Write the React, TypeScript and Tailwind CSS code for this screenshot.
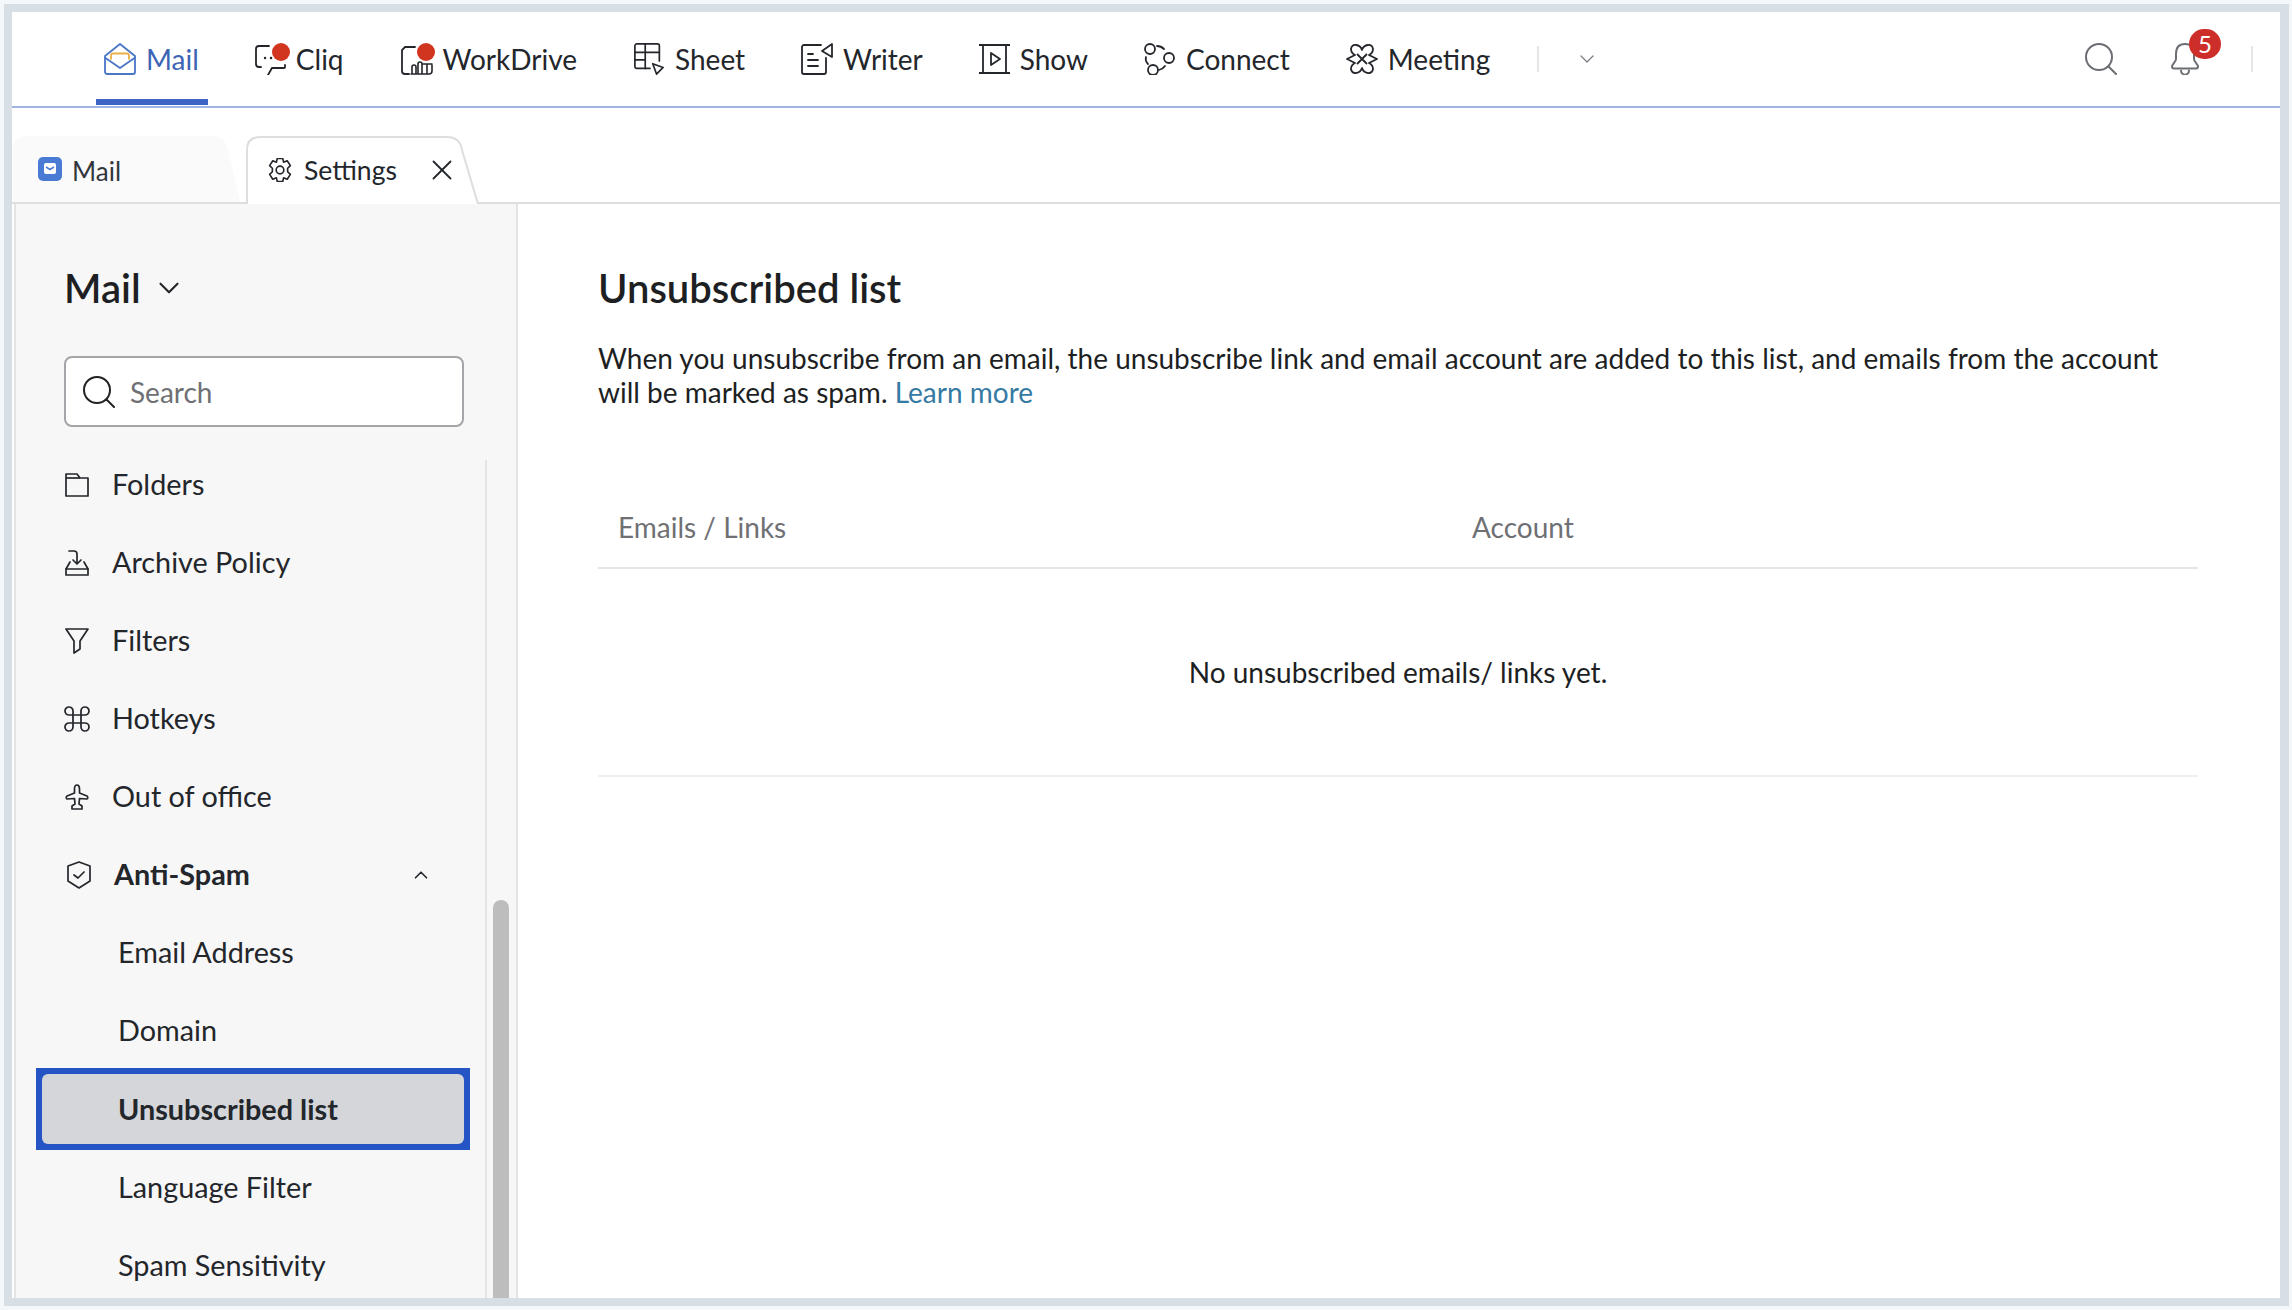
import React from "react"
import { ChevronDown, ChevronUp, Command, X } from "lucide-react"

const Ink = "#23262b"

const MailIcon = () => (
  <svg width="32" height="32" viewBox="0 0 32 32" fill="none" strokeLinejoin="round" strokeLinecap="round">
    <path d="M7 16V12.5a2 2 0 0 1 2-2H23a2 2 0 0 1 2 2V16" stroke="#e8b04c" strokeWidth="1.8" />
    <path d="M1 13L16 1L31 13V29a2 2 0 0 1-2 2H3a2 2 0 0 1-2-2Z" stroke="#4a76c6" strokeWidth="1.8" />
    <path d="M1.5 15L16 25L30.5 15" stroke="#4a76c6" strokeWidth="1.8" />
  </svg>
)

const CliqIcon = () => (
  <svg width="35" height="32" viewBox="0 0 35 32" fill="none" stroke={Ink} strokeWidth="1.8" strokeLinecap="round">
    <path d="M14 3H4a3 3 0 0 0-3 3V21a3 3 0 0 0 3 3H6" />
    <path d="M30 22V24a1 1 0 0 1-1 1H17L13 32" />
    <path d="M10 15h.1M16 15h.1" strokeWidth="2.4" />
    <circle cx="26" cy="9" r="9" fill="#d2351f" stroke="none" />
  </svg>
)

const DriveIcon = () => (
  <svg width="35" height="32" viewBox="0 0 35 32" fill="none" stroke={Ink} strokeWidth="1.8" strokeLinecap="round">
    <path d="M15 4H5L2 7V28a3 3 0 0 0 3 3H9" />
    <path d="M12 31V24a2 2 0 0 1 4 0V31M18 31V21a2 2 0 0 1 4 0M22 21V31M27 21V31M32 22V28a3 3 0 0 1-3 3H11M22 21H32" strokeWidth="1.6" />
    <circle cx="26" cy="9" r="9" fill="#d2351f" stroke="none" />
  </svg>
)

const SheetIcon = () => (
  <svg width="32" height="32" viewBox="0 0 32 34" fill="none" stroke={Ink} strokeWidth="1.8" strokeLinejoin="round" strokeLinecap="round">
    <path d="M17 27H3a2 2 0 0 1-2-2V3a2 2 0 0 1 2-2H25a2 2 0 0 1 2 2V19" />
    <path d="M1 10H27M12 1V27M1 18H12" />
    <path d="M20 22L31 26L24 33Z" />
  </svg>
)

const WriterIcon = () => (
  <svg width="32" height="32" viewBox="0 0 32 32" fill="none" stroke={Ink} strokeWidth="1.8" strokeLinejoin="round" strokeLinecap="round">
    <path d="M20 2H3a2 2 0 0 0-2 2V29a2 2 0 0 0 2 2H23a2 2 0 0 0 2-2V15" />
    <path d="M7 11H12M7 17H17M7 23H17" />
    <path d="M31 1V14L21 8Z" />
  </svg>
)

const ShowIcon = () => (
  <svg width="31" height="32" viewBox="0 0 31 32" fill="none" stroke={Ink} strokeWidth="1.8" strokeLinejoin="round">
    <path d="M0 2H31M0 30H31M4 2V30M27 2V30" />
    <path d="M12 10L21 16L12 22Z" />
  </svg>
)

const ConnectIcon = () => (
  <svg width="31" height="32" viewBox="0 0 31 32" fill="none" stroke={Ink} strokeWidth="1.8" strokeLinecap="round">
    <circle cx="6" cy="6" r="5" />
    <circle cx="25" cy="15" r="5" />
    <circle cx="9" cy="27" r="5" />
    <path d="M13 3Q17 3 20 6M2 14Q1 18 4 21M15 27Q19 26 21 23" />
  </svg>
)

const MeetingIcon = () => (
  <svg width="32" height="32" viewBox="0 0 32 32" fill="none" stroke={Ink} strokeWidth="1.8" strokeLinejoin="round">
    <path d="M16 7C18 1 26 0 27 6C27 9 25 11 23 12L31 16L23 20C25 21 27 23 27 26C26 32 18 31 16 25C14 31 6 32 5 26C5 23 7 21 9 20L1 16L9 12C7 11 5 9 5 6C6 0 14 1 16 7Z" />
    <path d="M11 11L21 21M21 11L11 21" />
  </svg>
)

const SearchIcon = ({ color, size }: { color: string; size: number }) => (
  <svg width={size} height={size} viewBox="0 0 32 32" fill="none" stroke={color} strokeWidth="2" strokeLinecap="round">
    <circle cx="14" cy="14" r="13" />
    <path d="M23.5 23.5L31 31" />
  </svg>
)

const BellIcon = () => (
  <svg width="28" height="32" viewBox="0 0 28 32" fill="none" stroke="#6b6e73" strokeWidth="2" strokeLinejoin="round" strokeLinecap="round">
    <path d="M14 1C8 1 5 5 5 11V16C5 19 1 21 1 23.5C1 25 2 25.5 3 25.5H25C26 25.5 27 25 27 23.5C27 21 23 19 23 16V11C23 5 20 1 14 1Z" />
    <path d="M10 27.5C10 33 18 33 18 27.5" />
  </svg>
)

const FolderIcon = () => (
  <svg width="24" height="24" viewBox="0 0 24 24" fill="none" stroke={Ink} strokeWidth="1.7" strokeLinejoin="round">
    <path d="M1 23V1H12L15 5H23V23Z" />
    <path d="M1 5H15" />
  </svg>
)

const ArchiveIcon = () => (
  <svg width="24" height="26" viewBox="0 0 24 26" fill="none" stroke={Ink} strokeWidth="1.7" strokeLinejoin="round" strokeLinecap="round">
    <path d="M4 1H9C11 1 12 2 12 4V13M8 10L12 14L16 10" />
    <path d="M5 12L1 19V25H23V19L19 12" />
    <path d="M1 19H23" />
  </svg>
)

const FilterIcon = () => (
  <svg width="24" height="26" viewBox="0 0 24 26" fill="none" stroke={Ink} strokeWidth="1.7" strokeLinejoin="round">
    <path d="M1 1H23L15 13V21L9 25V13Z" />
  </svg>
)

const PlaneIcon = () => (
  <svg width="24" height="26" viewBox="0 0 24 26" fill="none" stroke={Ink} strokeWidth="1.7" strokeLinejoin="round">
    <path d="M12 1C10.5 1 9.5 3 9.5 5V9L2 12C1 12.5 1 15 2 15L9.5 14.5L10 20L7 22V25H17V22L14 20L14.5 14.5L22 15C23 15 23 12.5 22 12L14.5 9V5C14.5 3 13.5 1 12 1Z" />
  </svg>
)

const ShieldIcon = () => (
  <svg className="ml-[2px] shrink-0" width="24" height="28" viewBox="0 0 24 28" fill="none" stroke={Ink} strokeWidth="1.7" strokeLinejoin="round" strokeLinecap="round">
    <path d="M12 1L23 5V20L12 27L1 20V5Z" />
    <path d="M7 14L11 17L17 11" />
  </svg>
)

const GearIcon = () => (
  <svg width="24" height="24" viewBox="1.5 1 21 22" fill="none" stroke={Ink} strokeWidth="1.5" strokeLinejoin="round">
    <path d="M9.5 1.5H14.5L15.3 4.8L18.6 3.5L21.5 8L19 10.4V13.6L21.5 16L18.6 20.5L15.3 19.2L14.5 22.5H9.5L8.7 19.2L5.4 20.5L2.5 16L5 13.6V10.4L2.5 8L5.4 3.5L8.7 4.8Z" />
    <circle cx="12" cy="12" r="3.5" />
  </svg>
)

const MailBadge = () => (
  <svg className="relative" width="24" height="24" viewBox="0 0 24 24" fill="none">
    <rect width="24" height="24" rx="5" fill="#4a7bd4" />
    <rect x="6" y="6" width="12" height="11" rx="2" fill="#fff" />
    <path d="M8 10L12 12.5L16 10" stroke="#4a7bd4" strokeWidth="1.5" />
  </svg>
)

const apps = [
  { name: "Mail", icon: <MailIcon />, gap: "gap-[10px]", active: true },
  { name: "Cliq", icon: <CliqIcon />, gap: "gap-[6px]" },
  { name: "WorkDrive", icon: <DriveIcon />, gap: "gap-[8px]" },
  { name: "Sheet", icon: <SheetIcon />, gap: "gap-[10px]" },
  { name: "Writer", icon: <WriterIcon />, gap: "gap-[10px]" },
  { name: "Show", icon: <ShowIcon />, gap: "gap-[10px]" },
  { name: "Connect", icon: <ConnectIcon />, gap: "gap-[11px]" },
  { name: "Meeting", icon: <MeetingIcon />, gap: "gap-[10px]" },
]

const TopNav = () => (
  <div className="flex items-center h-[96px] pl-[92px] pr-[27px] border-b-2 border-[#9fb4e3] shrink-0">
    <div className="flex items-center gap-[56px]">
      {apps.map((app) => (
        <div
          key={app.name}
          className={`relative flex items-center ${app.gap} text-[28px] leading-[34px] ${app.active ? "text-[#3d63b4]" : "text-[#23262b]"}`}
        >
          {app.icon}
          {app.name}
          {app.active && (
            <div className="absolute left-[-8px] right-[-9px] top-[57px] h-[6px] bg-[#3d63c4]" />
          )}
        </div>
      ))}
    </div>
    <div className="ml-[47px] w-[2px] h-[26px] bg-[#e5e5e5]" />
    <ChevronDown className="ml-[36px] text-[#7a7d82]" size={24} strokeWidth={1.3} />
    <div className="ml-auto flex items-center">
      <SearchIcon color="#6b6e73" size={32} />
      <div className="relative ml-[54px]">
        <BellIcon />
        <div className="absolute left-[18px] top-[-14px] w-[32px] h-[30px] rounded-full bg-[#ce2e29] text-white text-[24px] leading-[30px] text-center">
          5
        </div>
      </div>
      <div className="ml-[52px] w-[2px] h-[26px] bg-[#e5e5e5]" />
    </div>
  </div>
)

const TabBar = () => (
  <div className="flex items-end h-[96px] pl-[1px] border-b-2 border-[#dedede] shrink-0">
    <div className="relative flex items-center w-[227px] h-[66px] pl-[25px] text-[26px]">
      <svg className="absolute inset-0" width="227" height="66" viewBox="0 0 227 66">
        <path d="M0 66V14Q0 0 14 0H200Q212 0 215 14L227 66Z" fill="#fafafa" />
      </svg>
      <MailBadge />
      <span className="relative ml-[10px] pt-[4px] text-[#33363b]">Mail</span>
    </div>
    <div className="relative flex items-center w-[234px] h-[68px] -mb-[2px] ml-[6px] pl-[22px] text-[26.5px]">
      <svg className="absolute inset-0" width="234" height="68" viewBox="0 0 234 68" fill="none">
        <path d="M1 68V14Q1 1 14 1H201Q214 1 216 14L232 68" fill="#fff" stroke="#dedede" strokeWidth="2" />
      </svg>
      <div className="relative">
        <GearIcon />
      </div>
      <span className="relative ml-[12px] pt-[2px] text-[#23262b]">Settings</span>
      <X className="relative ml-[28px]" size={34} strokeWidth={1.3} color={Ink} />
    </div>
  </div>
)

const menu = [
  { label: "Folders", icon: <FolderIcon /> },
  { label: "Archive Policy", icon: <ArchiveIcon /> },
  { label: "Filters", icon: <FilterIcon /> },
  { label: "Hotkeys", icon: <Command className="-m-[4px]" size={32} strokeWidth={1.3} color={Ink} /> },
  { label: "Out of office", icon: <PlaneIcon /> },
  { label: "Anti-Spam", icon: <ShieldIcon />, bold: true, open: true },
  { label: "Email Address" },
  { label: "Domain" },
  { label: "Unsubscribed list", selected: true },
  { label: "Language Filter" },
  { label: "Spam Sensitivity" },
]

const MenuRow = ({ item }: { item: (typeof menu)[number] }) => {
  const inner = `flex items-center h-full text-[28.8px] text-[#23262b] ${item.icon ? "pl-[23px]" : "pl-[76px]"} ${item.bold || item.selected ? "font-bold" : ""}`
  if (item.selected)
    return (
      <div className="w-[422px] h-[70px] mb-[9px] bg-[#2555c4] outline-[6px] outline-[#2555c4]">
        <div className={`${inner} pt-[2px] rounded-[6px] bg-[#d5d6da]`}>{item.label}</div>
      </div>
    )
  return (
    <div className="w-[422px] h-[70px] mb-[8px]">
      <div className={inner}>
        {item.icon && (
          <span className={`flex w-[24px] ${item.bold ? "mr-[25px]" : "mr-[23px]"}`}>{item.icon}</span>
        )}
        {item.label}
        {item.open && <ChevronUp className="ml-auto mr-[32px]" size={22} strokeWidth={1.8} color={Ink} />}
      </div>
    </div>
  )
}

const Sidebar = () => (
  <div className="flex flex-col w-[504px] ml-[2px] shrink-0 bg-[#f7f7f7] border-l-2 border-r-2 border-[#e4e4e4] overflow-hidden">
    <div className="h-[256px] pl-[48px] shrink-0">
      <div className="flex items-center gap-[11px] pt-[59px] text-[40px] leading-[50px] font-semibold text-[#1d1f23]">
        Mail
        <ChevronDown size={34} strokeWidth={1.5} color={Ink} />
      </div>
      <div className="flex items-center w-[400px] h-[71px] mt-[43px] pl-[17px] gap-[15px] bg-white border-2 border-[#a5a5a9] rounded-[8px]">
        <SearchIcon color="#222" size={32} />
        <span className="text-[28px] text-[#6f7074]">Search</span>
      </div>
    </div>
    <div className="flex flex-1 min-h-0">
      <div className="w-[471px] pl-[26px] border-r-2 border-[#e4e4e4] overflow-hidden shrink-0">
        <div className="-mt-[10px]">
          {menu.map((item) => (
            <MenuRow key={item.label} item={item} />
          ))}
        </div>
      </div>
      <div className="flex-1 pl-[6px]">
        <div className="w-[16px] h-[398px] mt-[440px] rounded-t-[8px] bg-[#bdbdbd]" />
      </div>
    </div>
  </div>
)

const Content = () => (
  <div className="flex-1 pl-[80px] pr-[82px] pt-[59px] text-[#1d1f23]">
    <h1 className="text-[40px] leading-[50px] font-semibold">Unsubscribed list</h1>
    <p className="mt-[28px] text-[28px] leading-[34px]">
      When you unsubscribe from an email, the unsubscribe link and email account are added to this list, and emails from the account will be marked as spam.{" "}
      <a className="text-[#357aa3]">Learn more</a>
    </p>
    <div className="flex items-center h-[82px] mt-[78px] border-b-2 border-[#e5e5e5] text-[28px] text-[#6f7074]">
      <div className="w-[874px] pl-[20px]">Emails / Links</div>
      <div>Account</div>
    </div>
    <div className="flex items-center justify-center h-[208px] border-b-2 border-[#efefef] text-[28px]">
      No unsubscribed emails/ links yet.
    </div>
  </div>
)

const App = () => {
  return (
    <div className="w-[2292px] h-[1310px] pt-[4px] pb-[4px] pl-[4px] pr-[3px] bg-[#f4f7f9] font-[Lato,sans-serif] overflow-hidden">
      <div className="flex flex-col h-full bg-white border-[8px] border-r-[9px] border-[#d8dfe4]">
        <TopNav />
        <TabBar />
        <div className="flex flex-1 min-h-0">
          <Sidebar />
          <Content />
        </div>
      </div>
    </div>
  )
}

export default App
